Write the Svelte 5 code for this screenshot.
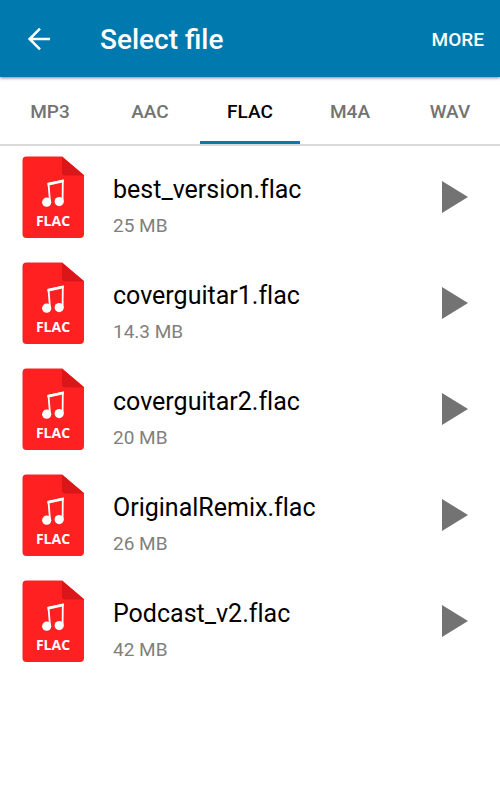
<script>
  const formats = ['MP3', 'AAC', 'FLAC', 'M4A', 'WAV'];
  const files = [
    { name: 'best_version.flac', size: '25 MB' },
    { name: 'coverguitar1.flac', size: '14.3 MB' },
    { name: 'coverguitar2.flac', size: '20 MB' },
    { name: 'OriginalRemix.flac', size: '26 MB' },
    { name: 'Podcast_v2.flac', size: '42 MB' }
  ];
  let active = $state('FLAC');
</script>

<div class="screen">
  <header>
    <button class="back" aria-label="Back">
      <svg width="24" height="24" viewBox="0 0 24 24" fill="none" stroke="#fff" stroke-width="2.5">
        <path d="M14 1.600 3.600 12 14 22.400M3.600 12H24" />
      </svg>
    </button>
    <h1>Select file</h1>
    <button class="more">MORE</button>
  </header>

  <div class="tabs" role="tablist">
    {#each formats as format}
      <button
        role="tab"
        class:active={active === format}
        aria-selected={active === format}
        onclick={() => (active = format)}>{format}</button>
    {/each}
  </div>

  <ul>
    {#each files as file}
      <li>
        <svg class="file" width="62" height="82" viewBox="0 0 62 82" aria-hidden="true">
          <path d="M4 0.500H40L62 19V78a4 4 0 0 1-4 4H4.500a4 4 0 0 1-4-4V4.500a4 4 0 0 1 4-4z" fill="#ff2122" />
          <path d="M40 0.500 62 19.500H43a3 3 0 0 1-3-3z" fill="#d91618" />
          <path d="M28 46 26.500 27.600 40.800 24.600 40.600 45.500" fill="none" stroke="#fff" stroke-width="1.8" />
          <path d="M25.400 26.900 41.700 23.500V26.300L25.600 29.700z" fill="#fff" />
          <circle cx="24.700" cy="46.200" r="4.600" fill="#fff" />
          <circle cx="37.200" cy="45.600" r="4.600" fill="#fff" />
          <text x="31" y="70" text-anchor="middle">FLAC</text>
        </svg>
        <div class="info">
          <span class="name">{file.name}</span>
          <span class="size">{file.size}</span>
        </div>
        <button class="play" aria-label="Play {file.name}">
          <svg width="26" height="32" viewBox="0 0 26 32"><path d="M0 0 26 16 0 32z" fill="#737373" /></svg>
        </button>
      </li>
    {/each}
  </ul>
</div>

<style>
  :global(body) {
    background: #fff;
  }
  .screen {
    min-height: 100vh;
    font-family: Roboto, 'Liberation Sans', sans-serif;
    background: #fff;
  }
  button {
    margin: 0;
    padding: 0;
    border: 0;
    background: none;
    color: inherit;
    font: inherit;
    cursor: pointer;
  }
  svg {
    display: block;
  }
  header {
    position: relative;
    display: flex;
    align-items: center;
    box-sizing: border-box;
    height: 77px;
    padding: 2px 16px 0 26px;
    background: #007aae;
    color: #fff;
    box-shadow: 0 1px 3px rgba(0, 0, 0, 0.5);
  }
  .back {
    margin-right: 50px;
  }
  .back svg {
    margin-bottom: 2px;
  }
  h1 {
    flex: 1;
    margin: 0;
    font-size: 28px;
    line-height: 36px;
    font-weight: 500;
  }
  .more {
    font-size: 19px;
    line-height: 24px;
    font-weight: 500;
  }
  .tabs {
    display: flex;
    height: 67px;
    border-bottom: 2px solid #dadada;
  }
  .tabs button {
    flex: 1;
    padding-top: 6px;
    border-bottom: 3px solid transparent;
    color: #737373;
    font-size: 19px;
    line-height: 24px;
    font-weight: 500;
  }
  .tabs .active {
    border-color: #0f76b0;
    color: #000;
  }
  ul {
    margin: 0;
    padding: 10px 0 0;
    list-style: none;
  }
  li {
    display: flex;
    align-items: center;
    height: 82px;
    margin-bottom: 24px;
    padding: 0 32px 0 22px;
  }
  .file text {
    fill: #fff;
    font: 700 14px 'Open Sans', sans-serif;
  }
  .info {
    display: flex;
    flex: 1;
    flex-direction: column;
    align-self: flex-start;
    gap: 6px;
    margin-left: 29px;
    padding-top: 18px;
  }
  .name {
    color: #000;
    font-size: 25px;
    line-height: 32px;
    font-variant-ligatures: none;
  }
  .size {
    color: #808080;
    font-size: 19px;
    line-height: 28px;
  }
</style>
